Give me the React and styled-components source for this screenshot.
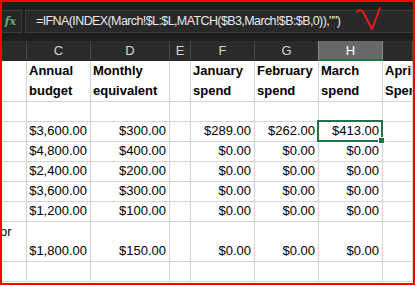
import React from "react";
import styled, { createGlobalStyle } from "styled-components";

const GlobalStyle = createGlobalStyle`
  html, body { margin: 0; padding: 0; background: #fff; }
  body { font-family: "Liberation Sans", Arial, sans-serif; }
`;

const COLS = [25, 64, 79, 21, 64, 64, 64, 30];
const LETTERS = ["", "C", "D", "E", "F", "G", "H", ""];
const SELECTED_COL = 6;

const Frame = styled.div`
  position: relative;
  width: 415px;
  height: 285px;
  box-sizing: border-box;
  border: 2px solid #ff0000;
  overflow: hidden;
  background: #fff;
`;

const TopBar = styled.div`
  display: flex;
  align-items: flex-start;
  gap: 3px;
  height: 39px;
  padding-top: 8px;
  box-sizing: border-box;
  background: #1f1f1f;
`;

const FxBox = styled.div`
  width: 20px;
  height: 23px;
  box-sizing: border-box;
  border: 1px solid #3b3b3b;
  border-left: none;
  background: #262626;
  color: #5fae6f;
  font: italic bold 11px "DejaVu Serif", serif;
  display: flex;
  align-items: center;
  justify-content: flex-end;
  padding-right: 5px;
`;

const FormulaBox = styled.div`
  flex: 1;
  height: 23px;
  box-sizing: border-box;
  border: 1px solid #3b3b3b;
  border-right: none;
  background: #292929;
  color: #e8e8e8;
  font-size: 12.5px;
  letter-spacing: -0.6px;
  line-height: 21px;
  padding-left: 10px;
  white-space: nowrap;
`;

const Grid = styled.div`
  display: grid;
  grid-template-columns: ${COLS.map((w) => `${w}px`).join(" ")};
`;

const HeadCell = styled.div`
  height: 20px;
  box-sizing: border-box;
  background: ${({ $active }) => ($active ? "#686868" : "#2b2b2b")};
  border-right: 1px solid ${({ $active }) => ($active ? "#8a8a8a" : "#4a4a4a")};
  border-left: ${({ $active }) => ($active ? "1px solid #8a8a8a" : "none")};
  margin-left: ${({ $active }) => ($active ? "-1px" : "0")};
  border-bottom: 2px solid ${({ $active }) => ($active ? "#217346" : "#2b2b2b")};
  color: ${({ $active }) => ($active ? "#ffffff" : "#d4d4d4")};
  font-size: 13px;
  line-height: 19px;
  text-align: center;
`;

const Cell = styled.div`
  position: relative;
  height: ${({ $h }) => $h}px;
  box-sizing: border-box;
  border-right: 1px solid #d4d4d4;
  border-bottom: 1px solid #d4d4d4;
  padding: 0 3px 0 2px;
  display: flex;
  flex-direction: column;
  justify-content: ${({ $top }) => ($top ? "flex-start" : "flex-end")};
  align-items: ${({ $num }) => ($num ? "flex-end" : "flex-start")};
  font-size: 13px;
  font-weight: ${({ $bold }) => ($bold ? 700 : 400)};
  line-height: 20px;
  color: #000;
  white-space: pre;
  overflow: hidden;
  ${({ $selected }) => $selected && "overflow: visible; z-index: 2;"}
`;

const Selection = styled.div`
  position: absolute;
  top: -2px;
  left: -2px;
  right: -1px;
  bottom: -1px;
  border: 2px solid #217346;
  pointer-events: none;

  &::after {
    content: "";
    position: absolute;
    right: -4px;
    bottom: -4px;
    width: 5px;
    height: 5px;
    background: #217346;
    border: 1px solid #fff;
  }
`;

const Tick = styled.svg`
  position: absolute;
  left: 352px;
  top: 5px;
`;

const money = (a, m, j, f, mar) => ["", a, m, "", j, f, mar, ""];

const ROWS = [
  {
    h: 41,
    bold: true,
    cells: ["", "Annual\nbudget", "Monthly\nequivalent", "", "January\nspend", "February\nspend", "March\nspend", "April\nSpend"],
  },
  { h: 20, cells: ["", "", "", "", "", "", "", ""] },
  { h: 20, cells: money("$3,600.00", "$300.00", "$289.00", "$262.00", "$413.00"), selected: true },
  { h: 20, cells: money("$4,800.00", "$400.00", "$0.00", "$0.00", "$0.00") },
  { h: 20, cells: money("$2,400.00", "$200.00", "$0.00", "$0.00", "$0.00") },
  { h: 20, cells: money("$3,600.00", "$300.00", "$0.00", "$0.00", "$0.00") },
  { h: 20, cells: money("$1,200.00", "$100.00", "$0.00", "$0.00", "$0.00") },
  { h: 40, cells: ["or", "$1,800.00", "$150.00", "", "$0.00", "$0.00", "$0.00", ""] },
  { h: 20, cells: ["", "", "", "", "", "", "", ""] },
];

export default function App() {
  return (
    <>
      <GlobalStyle />
      <Frame>
        <TopBar>
          <FxBox>fx</FxBox>
          <FormulaBox>=IFNA(INDEX(March!$L:$L,MATCH($B3,March!$B:$B,0)),"")</FormulaBox>
        </TopBar>
        <Grid>
          {LETTERS.map((l, i) => (
            <HeadCell key={i} $active={i === SELECTED_COL}>{l}</HeadCell>
          ))}
          {ROWS.map((row, r) =>
            row.cells.map((text, c) => {
              const isNum = text.startsWith("$");
              const selected = row.selected && c === SELECTED_COL;
              return (
                <Cell
                  key={`${r}-${c}`}
                  $h={row.h}
                  $bold={row.bold}
                  $num={isNum}
                  $top={c === 0 && text === "or"}
                  $selected={selected}
                  style={c === 0 && text === "or" ? { paddingLeft: 0, marginLeft: -2 } : undefined}
                >
                  {text}
                  {selected && <Selection />}
                </Cell>
              );
            })
          )}
        </Grid>
        <Tick width="32" height="28" viewBox="0 0 32 28">
          <path
            d="M3 5 C5 2 8 3 9 5 L18 22 L26 1"
            fill="none"
            stroke="#ff1a1a"
            strokeWidth="1.8"
            strokeLinecap="round"
            strokeLinejoin="round"
          />
        </Tick>
      </Frame>
    </>
  );
}
